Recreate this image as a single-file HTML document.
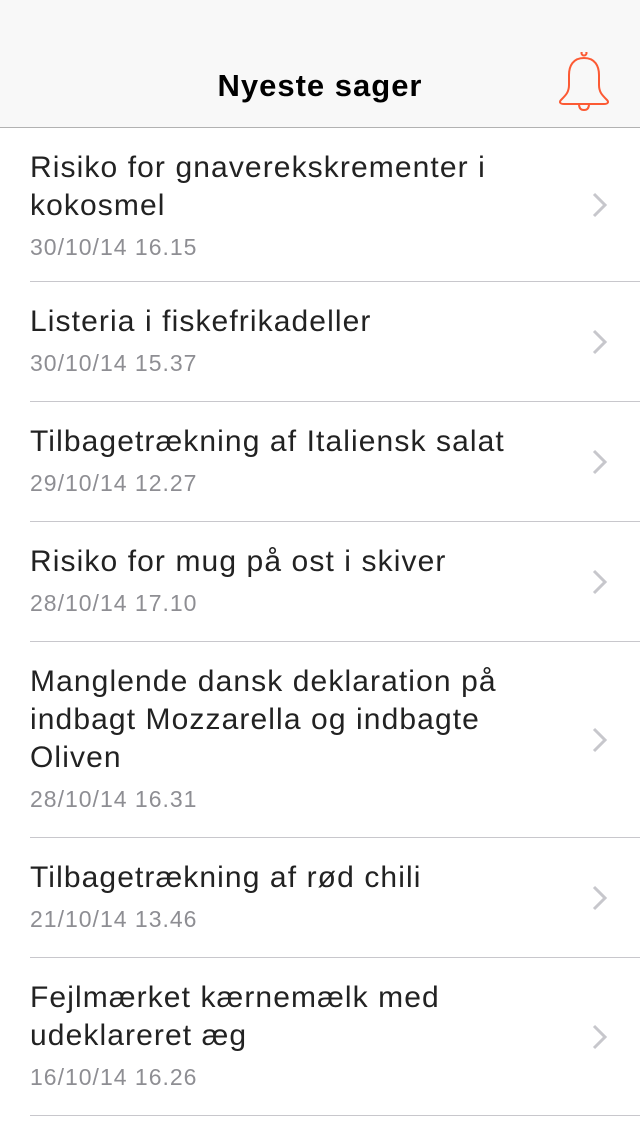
<!DOCTYPE html>
<html><head><meta charset="utf-8"><style>
body{margin:0;width:640px;height:1136px;overflow:hidden;background:#fff;font-family:"Liberation Sans",sans-serif;position:relative}
.hdr{position:absolute;top:0;left:0;width:640px;height:128px;background:#f8f8f8;border-bottom:1px solid #b2b2b2;box-sizing:border-box}
.hdr h1{position:absolute;top:67px;left:0;width:640px;text-align:center;margin:0;font-size:31px;font-weight:bold;color:#000;line-height:38px;letter-spacing:1px}
.bell{position:absolute;left:556px;top:52px}
.row{position:absolute;left:0;width:640px;box-sizing:border-box}
.row .sep{position:absolute;left:30px;right:0;bottom:0;height:1px;background:#c8c7cc}
.t{position:absolute;left:30px;width:560px;font-size:30px;line-height:38px;color:#222;letter-spacing:1.1px}
.d{position:absolute;left:30px;font-size:23px;color:#8e8e93;line-height:30px;letter-spacing:1px}
.ch{position:absolute;left:590px;width:20px;height:28px}
</style></head><body>
<div class="hdr"><h1>Nyeste sager</h1>
<svg class="bell" width="56" height="60" viewBox="0 0 56 60"><path d="M28 3.5a2.5 2.5 0 1 1 0.01 0M28 6c-11 0-15 8-15 17v10c0 7-3 10-8 15-2 2-1 4 3 4h40c4 0 5-2 3-4-5-5-8-8-8-15V23c0-9-4-17-15-17zM23 52c0 5 2.5 6 5 6s5-1 5-6" fill="none" stroke="#fc5a34" stroke-width="2"/></svg>
</div>
<div id="list"></div>
<script>
var rows=[
[128,154,["Risiko for gnaverekskrementer i","kokosmel"],"30/10/14 16.15"],
[282,120,["Listeria i fiskefrikadeller"],"30/10/14 15.37"],
[402,120,["Tilbagetrækning af Italiensk salat"],"29/10/14 12.27"],
[522,120,["Risiko for mug på ost i skiver"],"28/10/14 17.10"],
[642,196,["Manglende dansk deklaration på","indbagt Mozzarella og indbagte","Oliven"],"28/10/14 16.31"],
[838,120,["Tilbagetrækning af rød chili"],"21/10/14 13.46"],
[958,158,["Fejlmærket kærnemælk med","udeklareret æg"],"16/10/14 16.26"]];
var h="";
rows.forEach(function(r){
var n=r[2].length;
h+='<div class="row" style="top:'+r[0]+'px;height:'+r[1]+'px">';
h+='<div class="t" style="top:21px">'+r[2].join("<br>")+'</div>';
h+='<div class="d" style="top:'+(21+38*n+7)+'px">'+r[3]+'</div>';
h+='<svg class="ch" style="top:'+(r[1]/2-14)+'px" viewBox="0 0 20 28"><path d="M4 3l11 11-11 11" fill="none" stroke="#c7c7cc" stroke-width="3"/></svg>';
h+='<div class="sep"></div></div>';});
document.getElementById("list").innerHTML=h;
</script>
</body></html>
